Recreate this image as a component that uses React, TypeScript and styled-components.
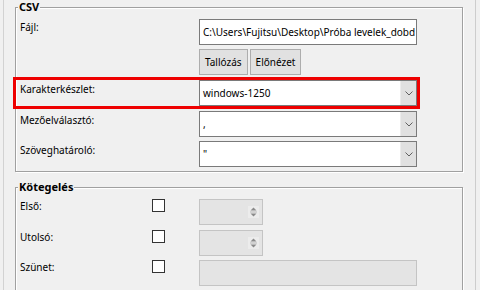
import styled, { createGlobalStyle } from 'styled-components'

const GlobalStyle = createGlobalStyle`
  html, body {
    margin: 0;
    padding: 0;
    background: #f0f0f0;
  }
  body {
    font-family: "Noto Sans", "Segoe UI", sans-serif;
    font-size: 10px;
    color: #000;
  }
`

const Window = styled.div`
  display: flex;
  width: 480px;
  height: 290px;
  overflow: hidden;
  background: #f0f0f0;
`

const LeftEdge = styled.div`
  flex: none;
  width: 3px;
  border-right: 1px solid #d2d2d2;
`

const RightEdge = styled.div`
  flex: none;
  width: 4px;
  border-left: 1px solid #cdcdcd;
`

const Content = styled.div`
  flex: none;
  width: 471px;
  box-sizing: border-box;
  padding-left: 11px;
`

const Group = styled.fieldset<{ gap?: number }>`
  width: 448px;
  box-sizing: border-box;
  margin: ${p => p.gap ?? 0}px 0 0 0;
  padding: 5px 0 4px 0;
  border: 1px solid #a0a0a0;
  box-shadow: inset 1px 1px 0 #fff, 1px 1px 0 #fff;
  min-width: 0;
`

const Legend = styled.legend`
  margin-left: 2px;
  padding: 0 1px;
  background: #f0f0f0;
  font-size: 11px;
  font-weight: bold;
  line-height: 14px;
`

const Row = styled.div<{ top?: number; highlight?: boolean }>`
  display: flex;
  align-items: flex-start;
  width: 401px;
  box-sizing: border-box;
  padding-left: 4px;
  margin-top: ${p => p.top ?? 0}px;
  outline: ${p => (p.highlight ? '3px solid #ee0000' : 'none')};
`

const Label = styled.div<{ width?: number; offset?: number }>`
  flex: none;
  width: ${p => p.width ?? 179}px;
  padding-top: ${p => p.offset ?? 0}px;
  line-height: 14px;
  white-space: nowrap;
`

const TextBox = styled.div<{ disabled?: boolean; width?: number }>`
  width: ${p => p.width ?? 218}px;
  height: 26px;
  box-sizing: border-box;
  border: 1px solid ${p => (p.disabled ? '#c4c4c4' : '#7a7a7a')};
  background: ${p => (p.disabled ? '#e4e4e4' : '#fff')};
  padding-left: 3px;
  line-height: 24px;
  white-space: nowrap;
  overflow: hidden;
`

const Buttons = styled.div`
  display: flex;
  gap: 2px;
`

const Button = styled.div`
  height: 26px;
  box-sizing: border-box;
  padding: 0 5px;
  border: 1px solid #adadad;
  background: #e1e1e1;
  line-height: 24px;
  white-space: nowrap;
`

const Combo = styled.div`
  display: flex;
  width: 218px;
  height: 26px;
  box-sizing: border-box;
  border: 1px solid #7a7a7a;
  background: #fff;
`

const ComboValue = styled.div`
  flex: auto;
  padding-left: 3px;
  line-height: 24px;
`

const ComboArrow = styled.div`
  flex: none;
  width: 15px;
  display: flex;
  align-items: center;
  justify-content: center;
  background: #e0e0e0;
  border-left: 1px solid #ececec;
`

const CheckCell = styled.div`
  flex: none;
  width: 47px;
`

const CheckBox = styled.div`
  width: 13px;
  height: 13px;
  box-sizing: border-box;
  border: 1px solid #333;
  background: #fff;
`

const Spin = styled.div`
  display: flex;
  justify-content: flex-end;
  align-items: center;
  width: 64px;
  height: 26px;
  box-sizing: border-box;
  border: 1px solid #c4c4c4;
  background: #e4e4e4;
  padding-right: 3px;
`

const SpinArrows = styled.div`
  display: flex;
  width: 11px;
  height: 12px;
  align-items: center;
  justify-content: center;
  background: #ececec;
`

const Chevron = () => (
  <svg width="8" height="5" viewBox="0 0 8 5">
    <polyline points="0.5,0.5 4,4 7.5,0.5" fill="none" stroke="#606060" strokeWidth="1" />
  </svg>
)

const UpDown = () => (
  <svg width="7" height="10" viewBox="0 0 7 10">
    <polygon points="3.5,0.5 6.5,3.5 0.5,3.5" fill="#8a8a8a" />
    <line x1="0" y1="5" x2="7" y2="5" stroke="#b8b8b8" strokeWidth="1" />
    <polygon points="0.5,6.5 6.5,6.5 3.5,9.5" fill="#8a8a8a" />
  </svg>
)

const ComboField = ({ value }: { value: string }) => (
  <Combo>
    <ComboValue>{value}</ComboValue>
    <ComboArrow>
      <Chevron />
    </ComboArrow>
  </Combo>
)

const batchRows = [
  { label: 'Első:', top: 0, spin: true },
  { label: 'Utolsó:', top: 5, spin: true },
  { label: 'Szünet:', top: 4, spin: false },
]

export default function App() {
  return (
    <>
      <GlobalStyle />
      <Window>
        <LeftEdge />
        <Content>
          <Group>
            <Legend>CSV</Legend>
            <Row>
              <Label offset={1}>Fájl:</Label>
              <TextBox>C:\Users\Fujitsu\Desktop\Próba levelek_dobd</TextBox>
            </Row>
            <Row top={4}>
              <Label />
              <Buttons>
                <Button>Tallózás</Button>
                <Button>Előnézet</Button>
              </Buttons>
            </Row>
            <Row top={5} highlight>
              <Label offset={2}>Karakterkészlet:</Label>
              <ComboField value="windows-1250" />
            </Row>
            <Row top={5}>
              <Label offset={2}>Mezőelválasztó:</Label>
              <ComboField value="," />
            </Row>
            <Row top={4}>
              <Label offset={2}>Szöveghatároló:</Label>
              <ComboField value={'"'} />
            </Row>
          </Group>
          <Group gap={8}>
            <Legend>Kötegelés</Legend>
            {batchRows.map(r => (
              <Row key={r.label} top={r.top}>
                <Label width={132}>{r.label}</Label>
                <CheckCell>
                  <CheckBox />
                </CheckCell>
                {r.spin ? (
                  <Spin>
                    <SpinArrows>
                      <UpDown />
                    </SpinArrows>
                  </Spin>
                ) : (
                  <TextBox disabled width={218} />
                )}
              </Row>
            ))}
          </Group>
        </Content>
        <RightEdge />
      </Window>
    </>
  )
}
